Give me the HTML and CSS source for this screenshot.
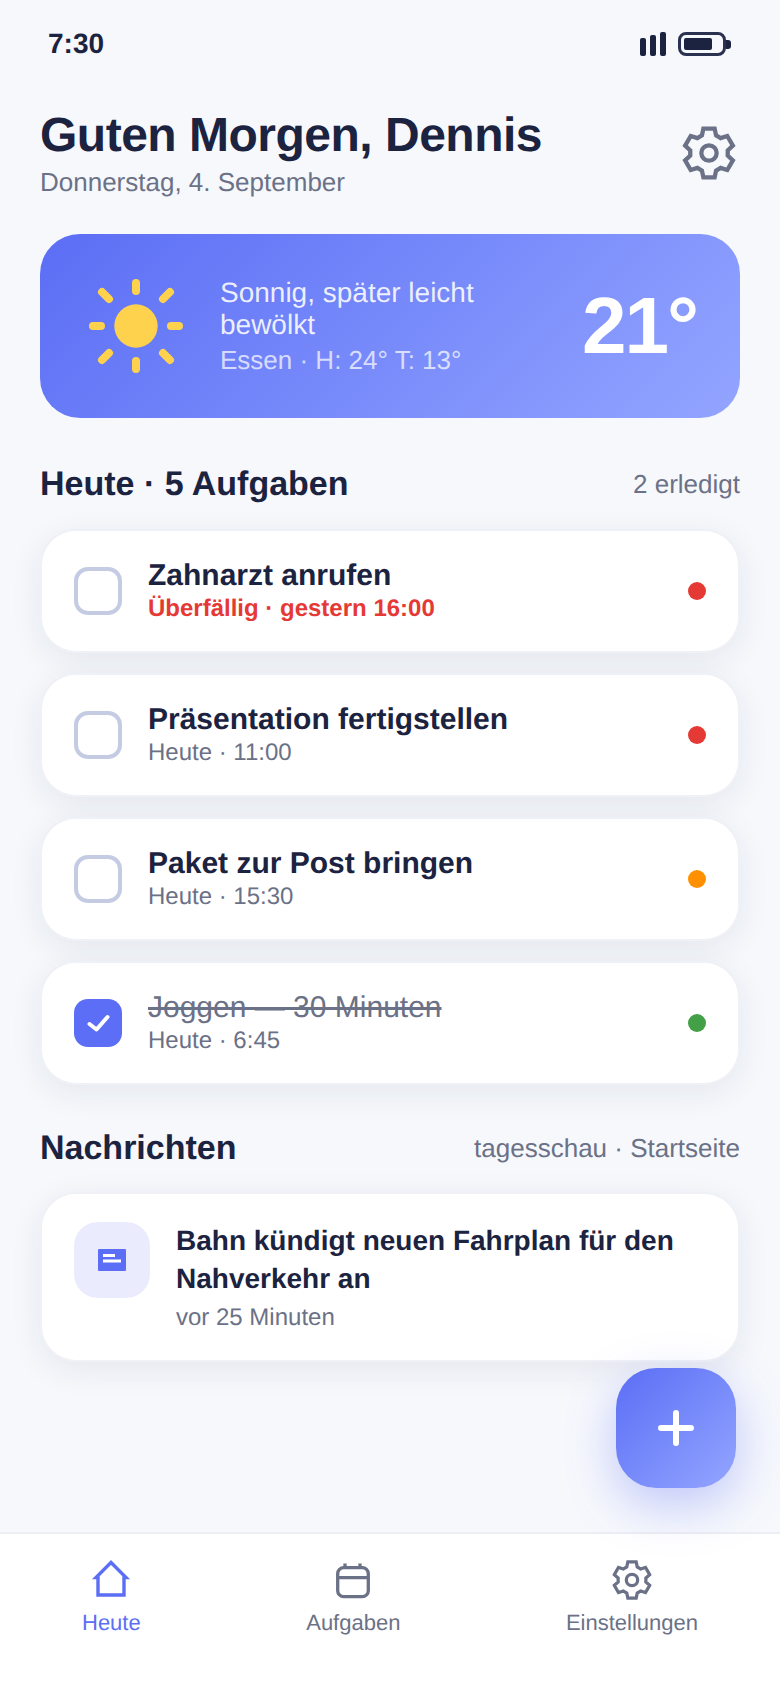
FILE: index.html
```html
<!DOCTYPE html>
<html lang="de">
<head>
<meta charset="utf-8">
<title>Heute</title>
<link rel="stylesheet" href="styles.css">
</head>
<body>
<svg class="defs" width="0" height="0" aria-hidden="true">
  <defs>
    <path id="gear" d="M8.85 4.21L9.5 1.18H14.5L15.15 4.21L17.17 5.38L20.12 4.43L22.61 8.75L20.32 10.83V13.17L22.61 15.25L20.12 19.57L17.17 18.62L15.15 19.79L14.5 22.82H9.5L8.85 19.79L6.83 18.62L3.88 19.57L1.39 15.25L3.68 13.17V10.83L1.39 8.75L3.88 4.43L6.83 5.38Z"/>
  </defs>
</svg>
<div class="screen">
  <div class="status">
    <span class="clock">7:30</span>
    <div class="status-icons">
      <div class="signal"><i class="s1"></i><i class="s2"></i><i class="s3"></i></div>
      <div class="battery"><div class="battery-body"><div class="battery-fill"></div></div><div class="battery-tip"></div></div>
    </div>
  </div>

  <main class="content">
    <header class="header">
      <div>
        <h1 class="greeting">Guten Morgen, Dennis</h1>
        <p class="date">Donnerstag, 4. September</p>
      </div>
      <svg class="gear-big" viewBox="0 0 24 24" fill="none" stroke="#6b7186" stroke-width="1.9"><use href="#gear"/><circle cx="12" cy="12" r="3.4"/></svg>
    </header>

    <section class="weather">
      <svg class="sun" viewBox="0 0 94 94">
        <circle cx="47" cy="47" r="21.7" fill="#ffd24d"/>
        <path d="M47 4v8M47 82v8M4 47h8M82 47h8M13 13l7 7M74 74l7 7M13 81l7-7M74 20l7-7" stroke="#ffd24d" stroke-width="8" stroke-linecap="round" fill="none"/>
      </svg>
      <div class="weather-text">
        <div class="weather-desc">Sonnig, später leicht bewölkt</div>
        <div class="weather-meta">Essen · H: 24° T: 13°</div>
      </div>
      <div class="temp">21°</div>
    </section>

    <div class="section-head tasks-head">
      <h2>Heute · 5 Aufgaben</h2>
      <span>2 erledigt</span>
    </div>

    <div class="tasks">
      <div class="card task">
        <div class="check"></div>
        <div class="task-body"><div class="task-title">Zahnarzt anrufen</div><div class="task-sub overdue">Überfällig · gestern 16:00</div></div>
        <div class="dot red"></div>
      </div>
      <div class="card task">
        <div class="check"></div>
        <div class="task-body"><div class="task-title">Präsentation fertigstellen</div><div class="task-sub">Heute · 11:00</div></div>
        <div class="dot red"></div>
      </div>
      <div class="card task">
        <div class="check"></div>
        <div class="task-body"><div class="task-title">Paket zur Post bringen</div><div class="task-sub">Heute · 15:30</div></div>
        <div class="dot orange"></div>
      </div>
      <div class="card task">
        <div class="check done"><svg viewBox="0 0 48 48" fill="none" stroke="#fff" stroke-width="4" stroke-linecap="round" stroke-linejoin="round"><path d="M15.5 25l7 5.5 11-12.5"/></svg></div>
        <div class="task-body"><div class="task-title struck">Joggen — 30 Minuten</div><div class="task-sub">Heute · 6:45</div></div>
        <div class="dot green"></div>
      </div>
    </div>

    <div class="section-head news-head">
      <h2>Nachrichten</h2>
      <span>tagesschau · Startseite</span>
    </div>

    <div class="card news">
      <div class="news-icon"><svg viewBox="0 0 28 22"><rect width="28" height="22" rx="1" fill="#5b6ef5"/><path d="M5 6.500h12M5 12h18" stroke="#fff" stroke-width="3" fill="none"/></svg></div>
      <div class="news-body">
        <div class="news-title">Bahn kündigt neuen Fahrplan für den Nahverkehr an</div>
        <div class="news-time">vor 25 Minuten</div>
      </div>
    </div>
  </main>

  <button class="fab" aria-label="Neu"><svg viewBox="0 0 36 36" fill="none" stroke="#fff" stroke-width="6" stroke-linecap="round"><path d="M18 3v30M3 18h30"/></svg></button>

  <nav class="nav">
    <div class="nav-item active">
      <svg class="nav-icon" viewBox="-2 -2 40 40" fill="none" stroke="#5b6ef5" stroke-width="3.4"><path d="M18 0.500L3 15.500H5V33H31V15.500H33Z"/></svg>
      <span>Heute</span>
    </div>
    <div class="nav-item">
      <svg class="nav-icon" viewBox="-2 -2 40 40" fill="none" stroke="#6b7186" stroke-width="3.3"><rect x="2.700" y="5.700" width="30.600" height="29" rx="6"/><path d="M2.700 15.700H33.300M10 1.500V7M25 1.500V7"/></svg>
      <span>Aufgaben</span>
    </div>
    <div class="nav-item">
      <svg class="nav-icon" viewBox="0 0 24 24" fill="none" stroke="#6b7186" stroke-width="1.95"><use href="#gear"/><circle cx="12" cy="12" r="3.4"/></svg>
      <span>Einstellungen</span>
    </div>
  </nav>
</div>
</body>
</html>
```
FILE: styles.css
```css
* { box-sizing: border-box; }
html, body { margin: 0; padding: 0; }
body { background: #f6f8fc; font-family: "Liberation Sans", Arial, sans-serif; color: #1c2340; text-rendering: geometricPrecision; }
.defs { position: absolute; }
.screen { position: relative; width: 780px; height: 1688px; overflow: hidden; display: flex; flex-direction: column; }

.status { height: 88px; padding: 0 49px 0 48px; display: flex; justify-content: space-between; align-items: center; flex: none; }
.clock { font-size: 28px; font-weight: 700; }
.status-icons { display: flex; align-items: center; gap: 12px; }
.signal { display: flex; align-items: flex-end; gap: 4px; height: 24px; }
.signal i { width: 6px; background: #1c2340; border-radius: 2px; display: block; }
.s1 { height: 18px; } .s2 { height: 21px; } .s3 { height: 24px; }
.battery { display: flex; align-items: center; }
.battery-body { width: 48px; height: 24px; border: 3px solid #2b3251; border-radius: 8px; padding: 3px; }
.battery-fill { width: 28px; height: 100%; background: #1c2340; border-radius: 2px; }
.battery-tip { width: 5px; height: 9px; background: #1c2340; border-radius: 0 3px 3px 0; }

.content { flex: 1; padding: 0 40px; min-height: 0; }
.header { display: flex; justify-content: space-between; align-items: flex-start; padding-top: 20px; height: 146px; }
.greeting { margin: 0; font-size: 48px; line-height: 56px; font-weight: 700; letter-spacing: -0.5px; }
.date { margin: 1px 0 0; font-size: 26px; line-height: 34px; color: #6b7186; }
.gear-big { width: 54px; height: 54px; margin: 18px 4px 0 0; }

.weather { height: 184px; border-radius: 40px; background: linear-gradient(135deg, #5b6ef5, #93a5ff); padding: 0 43px 0 49px; display: flex; align-items: center; }
.sun { width: 94px; height: 94px; flex: none; }
.weather-text { flex: 1; margin-left: 37px; padding: 2px 60px 0 0; }
.weather-desc { font-size: 28px; line-height: 32px; color: rgba(255,255,255,.88); }
.weather-meta { margin-top: 2px; font-size: 26px; line-height: 34px; color: rgba(255,255,255,.72); }
.temp { font-size: 80px; font-weight: 700; color: #fff; line-height: 1; letter-spacing: -2px; }

.section-head { display: flex; justify-content: space-between; align-items: center; height: 40px; }
.section-head h2 { margin: 0; font-size: 34px; font-weight: 700; }
.section-head span { font-size: 26px; color: #6b7186; }
.tasks-head { margin-top: 46px; }
.tasks { margin-top: 25px; display: flex; flex-direction: column; gap: 20px; }

.card { background: #fff; border: 2px solid #f0f1f6; box-shadow: 0 8px 32px rgba(28,35,64,.08); }
.task { height: 124px; border-radius: 36px; padding: 0 32px; display: flex; align-items: center; }
.check { width: 48px; height: 48px; border-radius: 14px; border: 4px solid #c5cbe3; flex: none; }
.check.done { background: #5b6ef5; border: none; }
.check svg { display: block; width: 100%; height: 100%; }
.task-body { flex: 1; margin-left: 26px; padding-top: 2px; }
.task-title { font-size: 30px; line-height: 34px; font-weight: 700; }
.task-title.struck { font-weight: 400; color: #6b7186; text-decoration: line-through; }
.task-sub { font-size: 24px; line-height: 32px; color: #6b7186; }
.task-sub.overdue { color: #e53935; font-weight: 700; }
.dot { width: 18px; height: 18px; border-radius: 50%; flex: none; }
.red { background: #e53935; } .orange { background: #ff9100; } .green { background: #43a047; }

.news-head { margin-top: 43px; }
.news { margin-top: 24px; height: 170px; border-radius: 36px; padding: 28px 32px; display: flex; align-items: flex-start; }
.news-icon { width: 76px; height: 76px; border-radius: 24px; background: #eaecfe; display: flex; align-items: center; justify-content: center; flex: none; }
.news-icon svg { width: 28px; height: 22px; }
.news-body { margin-left: 26px; flex: 1; }
.news-title { font-size: 28px; line-height: 38px; font-weight: 700; }
.news-time { margin-top: 4px; font-size: 24px; line-height: 32px; color: #6b7186; }

.fab { position: absolute; left: 616px; top: 1368px; width: 120px; height: 120px; border: none; border-radius: 40px; background: linear-gradient(135deg, #5b6ef5, #93a5ff); box-shadow: 0 16px 48px rgba(91,110,245,.35); display: flex; align-items: center; justify-content: center; padding: 0; }
.fab svg { width: 36px; height: 36px; }

.nav { flex: none; height: 156px; background: #fff; border-top: 2px solid #eceef3; display: flex; justify-content: space-between; padding: 26px 82px 0; }
.nav-item { display: flex; flex-direction: column; align-items: center; gap: 8px; font-size: 22px; color: #6b7186; line-height: 30px; }
.nav-item.active { color: #5b6ef5; }
.nav-icon { width: 40px; height: 40px; display: block; }
```
